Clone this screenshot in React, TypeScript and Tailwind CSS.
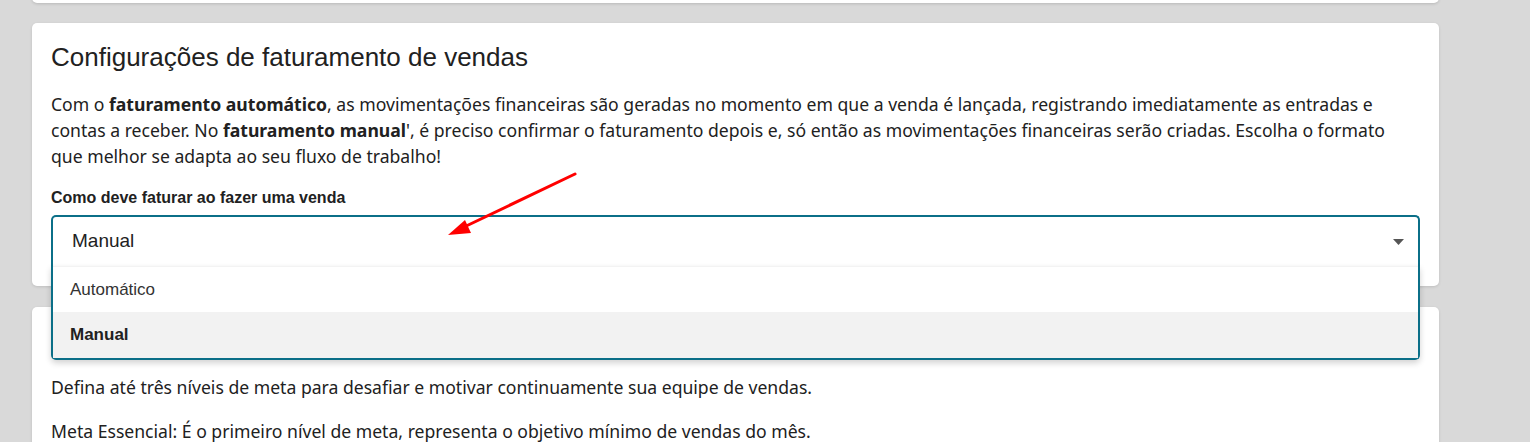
import React from "react";

const body = "font-['Noto_Sans',sans-serif]";
const arial = "font-['Liberation_Sans',Arial,sans-serif]";

function Caret() {
	return (
		<svg width="11" height="6" viewBox="0 0 11 6" className="shrink-0">
			<path d="M0 0 L11 0 L5.5 6 Z" fill="#555555" />
		</svg>
	);
}

function Arrow() {
	return (
		<svg
			className="absolute left-0 top-0 pointer-events-none"
			width="1530"
			height="442"
			viewBox="0 0 1530 442"
		>
			<line x1="575" y1="174" x2="462" y2="228" stroke="#ff0000" strokeWidth="3" strokeLinecap="round" />
			<path d="M448 235 L465 220 L471 233 Z" fill="#ff0000" />
		</svg>
	);
}

function BillingSelect() {
	return (
		<div className="relative">
			<div className="h-[51px] border-2 border-b-0 border-[#0b6f88] rounded-t-[5px] flex items-center justify-between pl-[19px] pr-[14px]">
				<span className={`${arial} text-[19px] text-[#212121]`}>Manual</span>
				<Caret />
			</div>
			<div className="absolute left-0 right-0 top-full z-10 bg-white border-2 border-t-0 border-[#0b6f88] rounded-b-[5px] shadow-[0_3px_6px_rgba(0,0,0,0.18)]">
				<div className="h-[46px] flex items-center pl-[17px] border-t border-[#f3f3f3]">
					<span className={`${arial} text-[17px] text-[#333333]`}>Automático</span>
				</div>
				<div className="h-[46px] flex items-center pl-[17px] bg-[#f2f2f2]">
					<span className={`${arial} text-[17px] font-bold text-[#212121]`}>Manual</span>
				</div>
			</div>
		</div>
	);
}

export default function App() {
	return (
		<div className="relative w-[1530px] h-[442px] overflow-hidden bg-[#d9d9d9]">
			<div className="w-[1407px] ml-[32px] flex flex-col">
				<div className="h-[20px] -mt-[17px] bg-white rounded-b-[5px] shadow-[0_1px_3px_rgba(0,0,0,0.15)]" />

				<div className="mt-[20px] bg-white rounded-[5px] shadow-[0_1px_3px_rgba(0,0,0,0.12)] px-[19px] pt-[19px] pb-[20px]">
					<h2 className={`${arial} text-[26px] leading-[30px] text-[#212121]`}>
						Configurações de faturamento de vendas
					</h2>
					<p className={`${body} mt-[19px] text-[17.6px] leading-[26px] text-[#212121]`}>
						Com o <b className="font-bold">faturamento automático</b>, as movimentações financeiras são geradas no momento em que a venda é lançada, registrando imediatamente as entradas e
						<br />
						contas a receber. No <b className="font-bold">faturamento manual</b>', é preciso confirmar o faturamento depois e, só então as movimentações financeiras serão criadas. Escolha o formato
						<br />
						que melhor se adapta ao seu fluxo de trabalho!
					</p>
					<label className={`${arial} block mt-[19px] text-[16px] leading-[20px] font-bold text-[#212121]`}>
						Como deve faturar ao fazer uma venda
					</label>
					<div className="mt-[7px]">
						<BillingSelect />
					</div>
				</div>

				<div className="mt-[21px] bg-white rounded-[5px] shadow-[0_1px_3px_rgba(0,0,0,0.12)] px-[19px] pt-[19px] pb-[18px]">
					{/* heading of this card sits under the open dropdown */}
					<div className="h-[30px]" />
					<p className={`${body} mt-[18px] text-[17.6px] leading-[26px] text-[#212121]`}>
						Defina até três níveis de meta para desafiar e motivar continuamente sua equipe de vendas.
					</p>
					<p className={`${body} mt-[18px] text-[17.6px] leading-[26px] text-[#212121]`}>
						Meta Essencial: É o primeiro nível de meta, representa o objetivo mínimo de vendas do mês.
					</p>
				</div>
			</div>
			<Arrow />
		</div>
	);
}
